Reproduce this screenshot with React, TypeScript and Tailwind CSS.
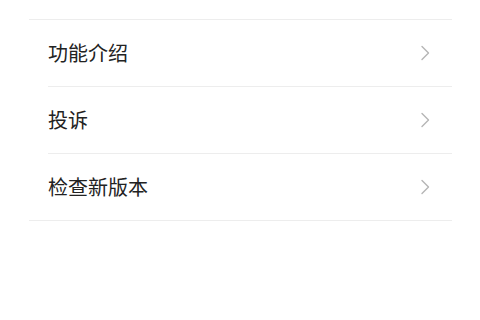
const ITEMS = ['功能介绍', '投诉', '检查新版本']

function Chevron() {
  return (
    <svg width="9" height="16" viewBox="0 0 9 16" fill="none" aria-hidden="true">
      <path d="M1 1.5 L7.5 8 L1 14.5" stroke="#b5b5b5" strokeWidth="1.4" strokeLinecap="round" strokeLinejoin="round" />
    </svg>
  )
}

export default function App() {
  return (
    <div
      className="h-[320px] w-[480px] bg-white pt-[19px]"
      style={{ fontFamily: '"Noto Sans CJK SC", "Noto Sans", sans-serif' }}
    >
      <ul className="ml-[29px] w-[423px] border-y border-[#ededed]" role="list">
        {ITEMS.map((label, i) => (
          <li key={label} className="pl-[19px]">
            <div
              className={
                i < ITEMS.length - 1
                  ? 'flex h-[67px] items-center justify-between border-b border-[#ededed] pr-[22px]'
                  : 'flex h-[66px] items-center justify-between pr-[22px]'
              }
            >
              <span className="text-[20px] leading-none text-[#222222]">{label}</span>
              <Chevron />
            </div>
          </li>
        ))}
      </ul>
    </div>
  )
}
